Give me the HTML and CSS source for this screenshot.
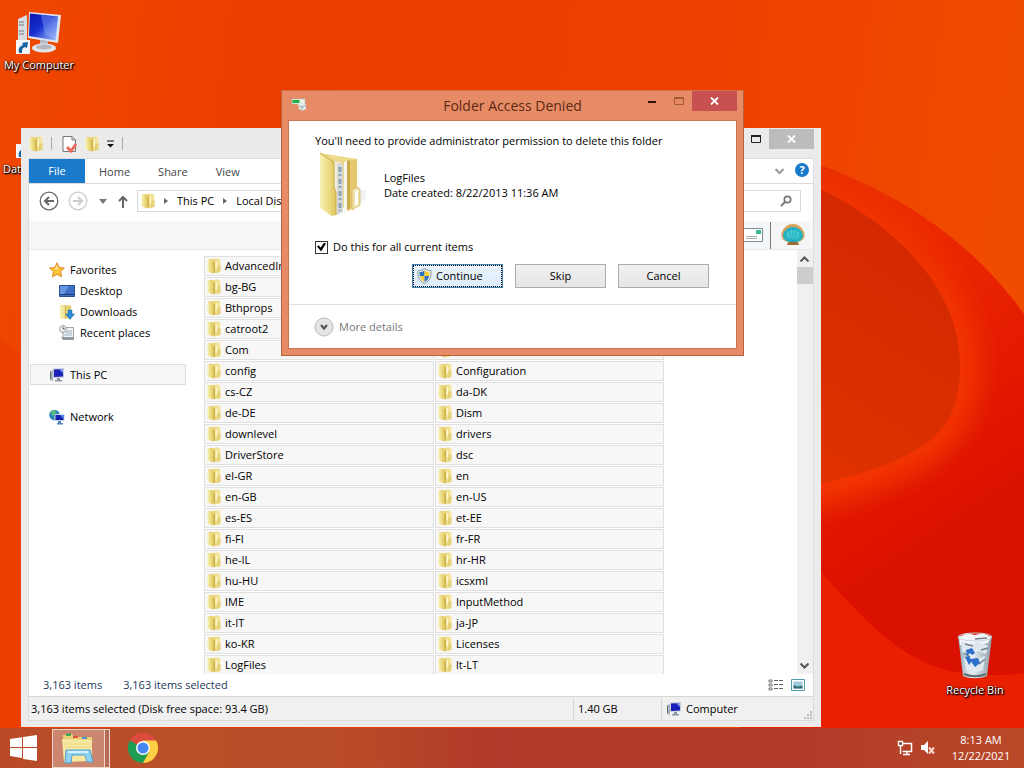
FILE: index.html
```html
<!DOCTYPE html>
<html lang="en">
<head>
<meta charset="utf-8">
<title>Folder Access Denied</title>
<link rel="stylesheet" href="styles.css">
</head>
<body>
<svg class="defs" aria-hidden="true">
  <defs>
    <linearGradient id="gPaper" x1="0" x2="1" y1="0" y2="0"><stop offset="0" stop-color="#f9f2b4"/><stop offset="1" stop-color="#e0c65c"/></linearGradient>
    <linearGradient id="gBack" x1="0" x2="1" y1="0" y2="0"><stop offset="0" stop-color="#e3c755"/><stop offset="1" stop-color="#f5e9a8"/></linearGradient>
    <linearGradient id="gScreen" x1="0" x2="1" y1="0" y2="1"><stop offset="0" stop-color="#0a14a8"/><stop offset="0.45" stop-color="#1730cf"/><stop offset="1" stop-color="#a9c6ff"/></linearGradient>
    <linearGradient id="gGlass" x1="0" x2="1" y1="0" y2="0"><stop offset="0" stop-color="#8fa6b4"/><stop offset="0.4" stop-color="#e8f0f4"/><stop offset="1" stop-color="#8c9da8"/></linearGradient>
    <symbol id="folder" viewBox="0 0 14 16">
      <path d="M1 1.500l10-1 2.500 1V14l-5 1.500z" fill="url(#gBack)"/>
      <path d="M.5 1.500L6.500 3v12.500l-6-2z" fill="url(#gPaper)"/>
      <path d="M6.500 4l1.500-.5v11l-1.500 1z" fill="#cdb044"/>
      <path d="M8.500 3.500l1.500-.5v7l-1.500 1z" fill="#fff8cf"/>
      <path d="M10 8l3.500-1v6.500L10 15z" fill="#e6d27a"/>
    </symbol>
    <symbol id="pc" viewBox="0 0 16 16">
      <path d="M1 4l3-1v11l-3-1z" fill="#a9b2b8"/><path d="M1.500 5v7" stroke="#5f6f66" />
      <path d="M4 1.500l11-.5v9.500l-11 .5z" fill="#c8ced8"/>
      <path d="M5 2.500l9-.5v7.500l-9 .5z" fill="#1a20b8"/>
      <path d="M10 2.300l4-.3v4z" fill="#7f9df5"/>
      <path d="M8 11h3v2h2v1.500H6V13h2z" fill="#8c96a2"/>
    </symbol>
    <symbol id="crumb" viewBox="0 0 6 8"><path d="M1 1l4 3-4 3z" fill="#666"/></symbol>
    <symbol id="shortcut" viewBox="0 0 14 14"><path d="M0 0h14v14H0z" fill="#f4f6f8"/><path d="M3 13c-1-5 1-7 4-8L6 3l6-1-1 6-2-1c-3 1-3 3-3 6z" fill="#1762a0"/></symbol>
  </defs>
</svg>

<main class="desktop">
  <svg class="wallpaper" viewBox="0 0 1024 768" preserveAspectRatio="none" aria-hidden="true">
    <defs>
      <linearGradient id="w1" x1="0" x2="1" y1="0" y2="0.100"><stop offset="0" stop-color="#ef4700"/><stop offset="0.300" stop-color="#ec3c00"/><stop offset="0.750" stop-color="#ef4100"/><stop offset="1" stop-color="#f04c00"/></linearGradient>
      <linearGradient id="w2" x1="0" x2="0.300" y1="0" y2="1"><stop offset="0" stop-color="#e63000"/><stop offset="0.280" stop-color="#ec2c00"/><stop offset="0.550" stop-color="#e51c00"/><stop offset="0.800" stop-color="#da1000"/></linearGradient>
      <linearGradient id="w3" x1="1" x2="0.600" y1="0" y2="1"><stop offset="0" stop-color="#cf2400"/><stop offset="1" stop-color="#e03200"/></linearGradient>
      <filter id="soft" x="-20%" y="-20%" width="140%" height="140%"><feGaussianBlur stdDeviation="11"/></filter>
      <clipPath id="band"><path d="M740 142C890 175 975 245 1024 314V768H740z"/></clipPath>
    </defs>
    <path d="M0 0h1024v768H0z" fill="url(#w1)"/>
    <path d="M0 340c20 10 40 30 50 60v368H0z" fill="#ed3e00"/>
    <g clip-path="url(#band)">
      <path d="M740 142h284v626H740z" fill="url(#w2)"/>
      <path d="M740 160C840 180 972 255 972 366C972 470 880 485 740 520z" fill="#f43600" stroke="#f03000" stroke-width="16" filter="url(#soft)"/>
      <path d="M740 160C830 180 960 255 960 366C960 455 900 465 740 504z" fill="url(#w3)"/>
      <path d="M740 490C870 610 890 690 1024 673V768H740z" fill="#e92000"/>
    </g>
  </svg>

  <a class="shortcut shortcut-computer" href="#">
    <svg width="50" height="46" viewBox="0 0 50 46" aria-hidden="true">
      <path d="M4 8l9-4v28l-9-2z" fill="#d9dde0"/><path d="M5 11h5M5 14h5M5 20h5M5 23h5" stroke="#737b80"/>
      <path d="M15 1l32 3-3 28-30-5z" fill="#dde5ee"/><path d="M16 2.500l28 3-2.500 24L15 25z" fill="url(#gScreen)"/>
      <path d="M27 4l17 2-2 21-11-3z" fill="#9dbcff" opacity=".35"/>
      <path d="M26 29l8 1v5h-8z" fill="#b6bcc4"/><ellipse cx="30" cy="37" rx="12" ry="4.500" fill="#e2e5e8"/><ellipse cx="30" cy="36" rx="8" ry="2.500" fill="#b3b9bf"/>
      <use href="#shortcut" x="2" y="29" width="14" height="14"/>
    </svg>
    <span>My Computer</span>
  </a>
  <a class="shortcut shortcut-data" href="#">
    <svg width="50" height="46" viewBox="0 0 50 46" aria-hidden="true"><use href="#shortcut" x="3" y="29" width="14" height="14"/></svg>
    <span>Data</span>
  </a>
  <a class="shortcut shortcut-bin" href="#">
    <svg width="40" height="48" viewBox="0 0 40 48" aria-hidden="true">
      <path d="M3 4h34l-5 40c-6 3-18 3-24 0z" fill="url(#gGlass)"/>
      <path d="M4 5l8-4 8 2 8-2 8 4-3 6-9 2-12-1-7 1z" fill="#f3f6f8"/><path d="M6 9l10 3 8-2 9 4-2 8-8-3-9 4-7-3zM9 26l9 2 12-4-2 14-9 3-8-3z" fill="#dfe8ee"/>
      <path d="M20 7l12-1M26 18l7-2M9 21l6 4M24 32l6-5M10 12l8 2" stroke="#76828b" stroke-width="1.500"/>
      <path d="M11 18l6-2 3 5-3 2-2-2-3 3zM10 25l4-1 3 5-3 4zM17 31l-1-4 7-1 2 5-5 4z" fill="#2c6fca"/>
      <ellipse cx="20" cy="5" rx="17" ry="4" fill="none" stroke="#c9d2d8"/><path d="M9 42c6 3 16 3 22 0" stroke="#5f6c75" stroke-width="2" fill="none"/>
    </svg>
    <span>Recycle Bin</span>
  </a>

  <section class="explorer" aria-label="File Explorer">
    <header class="explorer-title">
      <svg width="14" height="16"><use href="#folder"/></svg>
      <i class="sep"></i>
      <button type="button" aria-label="Properties"><svg width="15" height="18" viewBox="0 0 15 18"><path d="M1 1.500h9l3.500 3.500v11.500H1z" fill="#fff" stroke="#777"/><path d="M10 1.500V5h3.500" fill="none" stroke="#777"/><path d="M5 12l4 4 5-7" fill="none" stroke="#ec6a5a" stroke-width="3"/></svg></button>
      <button type="button" aria-label="New folder"><svg width="14" height="16"><use href="#folder"/></svg></button>
      <button type="button" aria-label="Customize"><svg width="7" height="8" viewBox="0 0 7 8"><path d="M0 1h7" stroke="#111"/><path d="M0 4h7L3.500 7.500z" fill="#111"/></svg></button>
      <i class="sep"></i>
      <span class="spacer"></span>
      <button type="button" aria-label="Maximize" class="win-max"><svg width="10" height="8" viewBox="0 0 10 8"><path d="M.5 1h9v6.500h-9z" fill="none" stroke="#222"/><path d="M0 1h10" stroke="#222" stroke-width="2"/></svg></button>
      <button type="button" aria-label="Close" class="win-close"><svg width="9" height="8" viewBox="0 0 9 8"><path d="M1 .5l7 7m0-7l-7 7" stroke="#fff" stroke-width="1.800"/></svg></button>
    </header>
    <div class="explorer-inner">
      <nav class="ribbon">
        <button type="button" class="tab tab-file">File</button>
        <button type="button" class="tab">Home</button>
        <button type="button" class="tab">Share</button>
        <button type="button" class="tab">View</button>
        <span class="spacer"></span>
        <button type="button" aria-label="Expand ribbon"><svg width="9" height="7" viewBox="0 0 9 7"><path d="M.5 1l4 4 4-4" fill="none" stroke="#999" stroke-width="2"/></svg></button>
        <button type="button" class="help" aria-label="Help">?</button>
      </nav>
      <div class="navbar">
        <button type="button" aria-label="Back"><svg width="20" height="20" viewBox="0 0 20 20"><circle cx="10" cy="10" r="8.800" fill="none" stroke="#6b6b6b" stroke-width="1.300"/><path d="M15 10H6m4-4l-4 4 4 4" fill="none" stroke="#666" stroke-width="2"/></svg></button>
        <button type="button" aria-label="Forward"><svg width="20" height="20" viewBox="0 0 20 20"><circle cx="10" cy="10" r="8.800" fill="none" stroke="#ccc" stroke-width="1.300"/><path d="M5 10h9m-4-4l4 4-4 4" fill="none" stroke="#ccc" stroke-width="2"/></svg></button>
        <button type="button" aria-label="Recent locations"><svg width="8" height="5" viewBox="0 0 8 5"><path d="M0 0h8L4 5z" fill="#777"/></svg></button>
        <button type="button" aria-label="Up"><svg width="10" height="13" viewBox="0 0 10 13"><path d="M5 13V2M1 6l4-4 4 4" fill="none" stroke="#666" stroke-width="2"/></svg></button>
        <div class="address">
          <svg width="14" height="16"><use href="#folder"/></svg>
          <svg width="6" height="8"><use href="#crumb"/></svg>
          <a href="#">This PC</a>
          <svg width="6" height="8"><use href="#crumb"/></svg>
          <a href="#">Local Disk (C:)</a>
        </div>
        <div class="search">
          <input type="search" aria-label="Search">
          <svg width="12" height="12" viewBox="0 0 12 12"><circle cx="7.500" cy="4.500" r="3.200" fill="none" stroke="#777" stroke-width="1.700"/><path d="M5 7l-4 4" stroke="#777" stroke-width="2"/></svg>
        </div>
      </div>
      <div class="classic-bar">
        <svg width="24" height="14" viewBox="0 0 24 14"><path d="M.5.5h23v13H.5z" fill="#fff" stroke="#7b8b92"/><path d="M17 2h5v4h-5z" fill="#3fb894"/><path d="M7 8.500h11M7 10.500h11" stroke="#a7b0b5"/></svg>
        <i class="rule"></i>
        <svg width="26" height="24" viewBox="0 0 26 24">
          <path d="M7 21l1-2C3 18 0 14 2 9 4 4 8 1 13 1s9 3 11 8c2 5-1 9-6 10l1 2z" fill="#d9a05a"/>
          <path d="M9 19C3 17 2 13 4 9c2-3 5-5 9-5s7 2 9 5c2 4 1 8-5 10z" fill="#25b4c6"/>
          <ellipse cx="13" cy="12" rx="7" ry="5" fill="#4fd3de" opacity=".7"/>
          <path d="M11 19L5 9M12 19L9 5M13 19V4M14 19l3-14M15 19l6-10" stroke="#1d97ab" stroke-width=".6" fill="none"/>
          <path d="M7 22h12l-2-3H9z" fill="#a06a34"/>
        </svg>
      </div>
      <div class="body">
        <ul class="tree">
          <li><a href="#"><svg width="16" height="16" viewBox="0 0 16 16"><path d="M8 .8l2.200 4.700 5.200.6-3.800 3.500 1 5.200L8 12.300l-4.600 2.500 1-5.200L.6 6.100l5.200-.6z" fill="#ffc53a" stroke="#dd8622"/><path d="M8 3l1 3.500L6 8z" fill="#fff0b0"/></svg>Favorites</a></li>
          <li class="sub"><a href="#"><svg width="16" height="16" viewBox="0 0 16 16"><path d="M.5 2.500h15v11H.5z" fill="#3d6fc4" stroke="#2b4f94"/><path d="M1 3h9L5 11H1z" fill="#6795e0"/><path d="M1 11.500h14" stroke="#223d70"/></svg>Desktop</a></li>
          <li class="sub"><a href="#"><svg width="16" height="16" viewBox="0 0 16 16"><path d="M1 1l8 0 3 1v12l-10 1-1-1z" fill="url(#gPaper)"/><path d="M6 2l1 .5V15H6z" fill="#d1b24a"/><path d="M9 6h4v4h2.500L11 15.500 6.500 10H9z" fill="#2b8fd6" stroke="#1c6aa8" stroke-width=".5"/></svg>Downloads</a></li>
          <li class="sub"><a href="#"><svg width="16" height="16" viewBox="0 0 16 16"><path d="M4 2.500h10.500v10H4z" fill="#f0f3f5" stroke="#9aa4aa"/><path d="M2 12h13v3H4z" fill="#8f9ba3"/><path d="M7 6h6M7 8h6M5 10h8" stroke="#9eb4c2"/><circle cx="4" cy="4" r="3.400" fill="#f8f8f8" stroke="#8f9ba3"/><path d="M4 2v2h2" stroke="#555" fill="none"/></svg>Recent places</a></li>
          <li class="current"><a href="#"><svg width="16" height="16"><use href="#pc"/></svg>This PC</a></li>
          <li class="last"><a href="#"><svg width="16" height="16" viewBox="0 0 16 16"><circle cx="5.500" cy="6" r="5.300" fill="#2b86b8"/><path d="M2 2l4-1 1 3-4 3zM5 7l3 1-2 3z" fill="#5cc07a"/><path d="M5.500 5h10v7h-10z" fill="#c5d4e4"/><path d="M6.500 6h8v5h-8z" fill="#151fb0"/><path d="M11 6h3.500v4z" fill="#5f86ef"/><path d="M9 12h3v2h2v1.500H8V14h1z" fill="#5a87b5"/></svg>Network</a></li>
        </ul>
        <div class="files">
          <ul class="column">
            <li><svg><use href="#folder"/></svg>AdvancedInstallers</li>
            <li><svg><use href="#folder"/></svg>bg-BG</li>
            <li><svg><use href="#folder"/></svg>Bthprops</li>
            <li><svg><use href="#folder"/></svg>catroot2</li>
            <li><svg><use href="#folder"/></svg>Com</li>
            <li><svg><use href="#folder"/></svg>config</li>
            <li><svg><use href="#folder"/></svg>cs-CZ</li>
            <li><svg><use href="#folder"/></svg>de-DE</li>
            <li><svg><use href="#folder"/></svg>downlevel</li>
            <li><svg><use href="#folder"/></svg>DriverStore</li>
            <li><svg><use href="#folder"/></svg>el-GR</li>
            <li><svg><use href="#folder"/></svg>en-GB</li>
            <li><svg><use href="#folder"/></svg>es-ES</li>
            <li><svg><use href="#folder"/></svg>fi-FI</li>
            <li><svg><use href="#folder"/></svg>he-IL</li>
            <li><svg><use href="#folder"/></svg>hu-HU</li>
            <li><svg><use href="#folder"/></svg>IME</li>
            <li><svg><use href="#folder"/></svg>it-IT</li>
            <li><svg><use href="#folder"/></svg>ko-KR</li>
            <li><svg><use href="#folder"/></svg>LogFiles</li>
          </ul>
          <ul class="column">
            <li><svg><use href="#folder"/></svg></li>
            <li><svg><use href="#folder"/></svg></li>
            <li><svg><use href="#folder"/></svg></li>
            <li><svg><use href="#folder"/></svg></li>
            <li><svg><use href="#folder"/></svg></li>
            <li><svg><use href="#folder"/></svg>Configuration</li>
            <li><svg><use href="#folder"/></svg>da-DK</li>
            <li><svg><use href="#folder"/></svg>Dism</li>
            <li><svg><use href="#folder"/></svg>drivers</li>
            <li><svg><use href="#folder"/></svg>dsc</li>
            <li><svg><use href="#folder"/></svg>en</li>
            <li><svg><use href="#folder"/></svg>en-US</li>
            <li><svg><use href="#folder"/></svg>et-EE</li>
            <li><svg><use href="#folder"/></svg>fr-FR</li>
            <li><svg><use href="#folder"/></svg>hr-HR</li>
            <li><svg><use href="#folder"/></svg>icsxml</li>
            <li><svg><use href="#folder"/></svg>InputMethod</li>
            <li><svg><use href="#folder"/></svg>ja-JP</li>
            <li><svg><use href="#folder"/></svg>Licenses</li>
            <li><svg><use href="#folder"/></svg>lt-LT</li>
          </ul>
        </div>
        <div class="scrollbar">
          <button type="button" aria-label="Scroll up"><svg width="9" height="6" viewBox="0 0 9 6"><path d="M.5 5.500l4-4 4 4" fill="none" stroke="#555" stroke-width="2"/></svg></button>
          <div class="track"><div class="thumb"></div></div>
          <button type="button" aria-label="Scroll down"><svg width="9" height="6" viewBox="0 0 9 6"><path d="M.5.5l4 4 4-4" fill="none" stroke="#555" stroke-width="2"/></svg></button>
        </div>
      </div>
      <div class="details-bar">
        <span>3,163 items</span><span>3,163 items selected</span>
        <span class="spacer"></span>
        <button type="button" aria-label="Details view"><svg width="16" height="12" viewBox="0 0 16 12"><path d="M1 1h3v2H1zM1 5h3v2H1zM1 9h3v2H1z" fill="none" stroke="#777"/><path d="M6 1.500h4m1 0h4M6 5.500h4m1 0h4M6 9.500h4m1 0h4" stroke="#666"/></svg></button>
        <button type="button" aria-label="Large icons view"><svg width="14" height="12" viewBox="0 0 14 12"><path d="M.5.500h13v11H.5z" fill="#fff" stroke="#5699ad"/><path d="M2.500 2.500h9v7h-9z" fill="#9cc9dc"/><path d="M2.500 6l4 1.500 5-1v3h-9z" fill="#2f6f74"/></svg></button>
      </div>
      <footer class="status">
        <span class="cell cell-main">3,163 items selected (Disk free space: 93.4 GB)</span>
        <span class="cell cell-size">1.40 GB</span>
        <span class="cell cell-zone"><svg width="16" height="16"><use href="#pc"/></svg>Computer</span>
        <svg class="grip" width="9" height="9" viewBox="0 0 9 9"><path d="M7 1h2v2H7zM4 4h2v2H4zM7 4h2v2H7zM1 7h2v2H1zM4 7h2v2H4zM7 7h2v2H7z" fill="#bbb"/></svg>
      </footer>
    </div>
  </section>

  <section class="dialog" role="dialog" aria-labelledby="dialog-title">
    <header class="dialog-head">
      <svg width="16" height="16" viewBox="0 0 16 16" aria-hidden="true"><path d="M1 1h13v5H1z" fill="#e9f3ea" stroke="#a9b9ac" stroke-width=".5"/><path d="M1.500 2h7v3h-7z" fill="#1fb141"/><path d="M7 6l5-1 3 1v5l-4 2-3-2z" fill="#e6e9ea"/><path d="M8 8l3 1 4-2M11 9v4" stroke="#9ba5ab" fill="none"/></svg>
      <h1 id="dialog-title">Folder Access Denied</h1>
      <div class="dialog-controls">
        <button type="button" aria-label="Minimize"><svg width="8" height="3" viewBox="0 0 8 3"><path d="M0 1h8v2H0z" fill="#301208"/></svg></button>
        <button type="button" aria-label="Maximize" disabled><svg width="10" height="8" viewBox="0 0 10 8"><path d="M.5 1h9v6.500h-9z" fill="none" stroke="#a35b35"/><path d="M0 1h10" stroke="#a35b35" stroke-width="2"/></svg></button>
        <button type="button" class="dialog-close" aria-label="Close"><svg width="9" height="8" viewBox="0 0 9 8"><path d="M1 .5l7 7m0-7l-7 7" stroke="#fff" stroke-width="1.800"/></svg></button>
      </div>
    </header>
    <div class="dialog-body">
      <div class="dialog-main">
        <p>You'll need to provide administrator permission to delete this folder</p>
        <div class="item">
          <svg width="52" height="68" viewBox="0 0 52 68" aria-hidden="true">
            <path d="M37 58l13-9 1-9-12-4z" fill="#ddd" opacity=".45"/>
            <path d="M5 2l37 6v44l-24 8z" fill="#ecd98a"/>
            <path d="M17 10l8 1v52l-8 2z" fill="#f1eedc"/><path d="M22 12l6 1v48l-6 3z" fill="#d6d9d8"/>
            <path d="M25 16v44" stroke="#8fa3b1" stroke-width="3" stroke-dasharray="5 2 2 3"/>
            <path d="M29 11l3-1v50l-3 2z" fill="#f6f5ee"/>
            <path d="M32 10l10-2v44l-8 8-2-1z" fill="#e4c96e"/><path d="M32 10l3-1v48l-3 2z" fill="#caa94b"/>
            <path d="M5 2l14 9v25l2 5v23l-4 1L5 57z" fill="url(#gPaper)"/>
            <path d="M5 2l14 9v25l2 5v23" fill="none" stroke="#c8a94c"/><path d="M37 38l6-2 2 3v15l-8 5z" fill="#f0e2a4" stroke="#ccb15d" stroke-width=".7"/><path d="M40 40l3-1v14l-3 2z" fill="#fff"/>
          </svg>
          <div class="item-text"><div>LogFiles</div><div>Date created: 8/22/2013 11:36 AM</div></div>
        </div>
        <div class="check"><input type="checkbox" id="all-items" checked><label for="all-items">Do this for all current items</label></div>
        <div class="actions">
          <button type="button" class="btn btn-primary"><svg width="15" height="16" viewBox="0 0 15 16" aria-hidden="true"><path d="M7.500.5c2 1.500 4 2 6.500 2 .5 6-1 10.500-6.500 13C2 13 .5 8.500 1 2.500c2.500 0 4.500-.5 6.500-2z" fill="#e8edf0" stroke="#8c979e"/><path d="M7.500 2.500C6 3.500 4 4 2.500 4c0 1.500 0 2.500.3 4h4.700z" fill="#2a73c4"/><path d="M7.500 2.500c1.500 1 3.500 1.500 5 1.500 0 1.500 0 2.500-.3 4H7.500z" fill="#f7d038"/><path d="M2.800 8c.7 2.700 2 4.500 4.700 6V8z" fill="#f7d038"/><path d="M12.200 8c-.7 2.700-2 4.500-4.700 6V8z" fill="#2a73c4"/></svg>Continue</button>
          <button type="button" class="btn">Skip</button>
          <button type="button" class="btn">Cancel</button>
        </div>
      </div>
      <div class="dialog-more">
        <button type="button" class="more"><svg width="20" height="20" viewBox="0 0 20 20" aria-hidden="true"><circle cx="10" cy="10" r="9" fill="#e4e4e4" stroke="#bdbdbd"/><path d="M7 8l3 3.500L13 8" fill="none" stroke="#555" stroke-width="2.200"/></svg>More details</button>
      </div>
    </div>
  </section>
</main>

<nav class="taskbar" aria-label="Taskbar">
  <button type="button" class="start" aria-label="Start"><svg width="28" height="26" viewBox="0 0 28 26"><path d="M0 4l12-1.800V12H0zM13 2l14-2v12H13zM0 13h12v10L0 21zM13 13h14v13l-14-2z" fill="#fff"/></svg></button>
  <button type="button" class="task-explorer" aria-label="File Explorer"><svg width="34" height="32" viewBox="0 0 34 32">
    <path d="M2 3l9-1 2 3h18v24H3z" fill="#e9cf72"/><path d="M5 2l5-1v3H5z" fill="#3ea655"/><path d="M12 4h5v2h-5z" fill="#d9533f"/><path d="M21 5h5v2h-5z" fill="#4b95d6"/>
    <path d="M1 7l30 1v21l-28 1z" fill="#f6e8a0"/><path d="M3 12h28M3 15h28" stroke="#ead48a"/>
    <path d="M5 18h24l3 12h-6l-2-7H11l-1 8H4z" fill="#8fd2f2" stroke="#4da3d0"/><path d="M7 20h20" stroke="#d4f1fd" stroke-width="2"/></svg></button>
  <button type="button" class="task-chrome" aria-label="Chrome"><svg width="30" height="30" viewBox="0 0 30 30"><path d="M15 15L2 7.500A15 15 0 0 1 28 7.500z" fill="#dd4b3e"/><path d="M15 15L2 7.500A15 15 0 0 0 15 30l6.500-11z" fill="#1f9d55"/><path d="M15 15l6 4-6 11A15 15 0 0 0 28 7.500H15z" fill="#fdd045"/><circle cx="15" cy="15" r="7" fill="#fff"/><circle cx="15" cy="15" r="5.500" fill="#4686f0"/></svg></button>
  <span class="spacer"></span>
  <button type="button" aria-label="Network"><svg width="16" height="16" viewBox="0 0 16 16"><path d="M5 3.500h9.500v8H5.500M10 12v2.500M6 14.500h7" fill="none" stroke="#fff" stroke-width="1.500"/><path d="M1.500 1.500h4v4h-4zM3.500 6v8" fill="#7b3020" stroke="#fff" stroke-width="1.400"/></svg></button>
  <button type="button" class="sound" aria-label="Sound muted"><svg width="15" height="14" viewBox="0 0 15 14"><path d="M0 4h3l4-4v13L3 9H0z" fill="#fff"/><path d="M8 6.500l5 6m0-6l-5 6" stroke="#fbd8cf" stroke-width="2"/></svg></button>
  <button type="button" class="clock"><span>8:13 AM</span><span>12/22/2021</span></button>
</nav>
</body>
</html>
```

FILE: styles.css
```css
* { box-sizing: border-box; }
body {
  margin: 0;
  height: 100vh;
  display: grid;
  grid-template-rows: 1fr 40px;
  overflow: hidden;
  font: 11px/16px "Open Sans", "Noto Sans", sans-serif;
  color: #000;
  background: #ec3c00;
}
button { font: inherit; color: inherit; border: 0; padding: 0; background: none; display: inline-flex; align-items: center; justify-content: center; }
ul { list-style: none; margin: 0; padding: 0; }
a { color: inherit; text-decoration: none; }
svg { display: block; flex: none; }
.defs { position: absolute; width: 0; height: 0; }
.spacer { flex: 1; }

.desktop { position: relative; min-height: 0; }
.wallpaper { position: absolute; inset: 0; width: 100%; height: 100vh; }

.shortcut { position: absolute; display: flex; flex-direction: column; align-items: center; width: 78px; color: #fff; text-shadow: 1px 1px 2px #000, 1px 1px 1px #000, 0 0 2px #000; }
.shortcut-computer { left: 0; top: 11px; }
.shortcut-data { left: 0; top: 115px; align-items: flex-start; padding-left: 3px; }
.shortcut-data svg { margin-left: 10px; }
.shortcut-bin { right: 10px; top: 632px; }
.shortcut-bin span { margin-top: 2px; }

.explorer { position: absolute; left: 21px; right: 203px; top: 128px; bottom: 1px; padding: 0 8px 7px; background: #ebebeb; display: flex; flex-direction: column; }
.explorer-title { display: flex; align-items: center; height: 31px; gap: 8px; }
.explorer-title .sep { width: 1px; height: 13px; background: #aaa; }
.explorer-title .sep + button { margin-left: 2px; }
.win-max { align-self: flex-start; height: 22px; }
.win-close { align-self: flex-start; width: 45px; height: 20px; margin: 1px -1px 0 0; background: #bcbcbc; }
.explorer-inner { flex: 1; min-height: 0; display: flex; flex-direction: column; background: #fff; outline: 1px solid #dcdcdc; }
.ribbon { display: flex; height: 25px; border-bottom: 1px solid #dcdcdc; color: #444; padding-right: 4px; }
.tab { padding: 2px 14px 0; }
.tab-file { width: 56px; padding: 0; background: #1979ca; color: #fff; }
.help { width: 14px; height: 14px; margin: 4px 0 0 11px; border-radius: 50%; background: #1979ca; color: #fff; font-weight: bold; }
.navbar { display: flex; align-items: center; height: 37px; padding: 0 12px 3px 10px; gap: 9px; }
.navbar button + button + button { margin-left: 2px; }
.address { flex: 1; display: flex; align-items: center; gap: 8px; height: 22px; padding-left: 3px; border: 1px solid #d9d9d9; }
.search { display: flex; align-items: center; width: 170px; height: 22px; border: 1px solid #d9d9d9; padding-right: 8px; }
.search input { flex: 1; min-width: 0; border: 0; outline: 0; font: inherit; }
.classic-bar { display: flex; justify-content: flex-end; align-items: center; height: 29px; gap: 7px; padding-right: 7px; background: #f5f6f7; border-bottom: 1px solid #e6e9ec; }
.classic-bar .rule { width: 1px; height: 27px; background: #777; margin-right: 2px; }

.body { flex: 1; min-height: 0; display: flex; }
.tree { width: 175px; flex: none; padding: 9px 18px 0 1px; }
.tree li { height: 21px; padding-left: 18px; border: 1px solid transparent; }
.tree a { display: flex; align-items: center; gap: 5px; height: 19px; }
.tree .sub { padding-left: 28px; }
.tree .current { margin: 21px 0; background: #f7f7f7; border-color: #dedede; }
.files { flex: 1; min-width: 0; display: grid; grid-template-columns: 230px 229px; gap: 1px; padding-top: 6px; overflow: hidden; align-content: start; }
.column { display: flex; flex-direction: column; gap: 1px; }
.column li { display: flex; align-items: center; gap: 4px; height: 20px; padding-left: 2px; background: #f7f7f7; border: 1px solid #e0e0e0; }
.column svg { width: 14px; height: 16px; }
.scrollbar { width: 16px; display: flex; flex-direction: column; background: #f0f0f0; }
.scrollbar button { height: 17px; padding-right: 1px; }
.track { flex: 1; }
.thumb { height: 17px; background: #cdcdcd; }
.details-bar { display: flex; align-items: center; height: 22px; gap: 21px; padding: 0 8px 0 14px; color: #1e395b; }
.details-bar button + button { margin-left: -14px; }
.status { display: flex; align-items: center; height: 24px; background: #f0f0f0; border-top: 1px solid #d5d5d5; }
.cell { display: flex; align-items: center; gap: 4px; height: 22px; padding-left: 4px; border-left: 1px solid #d5d5d5; }
.cell-main { flex: 1; border-left: 0; padding-left: 2px; }
.cell-size { width: 88px; }
.cell-zone { width: 142px; }
.grip { align-self: flex-end; margin: 0 1px 1px 0; }

.dialog { position: absolute; left: 281px; right: 280px; top: 90px; padding: 0 7px 7px; background: #e78b66; border: 1px solid #b9603d; border-top-color: #d07147; }
.dialog-head { position: relative; display: flex; align-items: center; height: 30px; padding-left: 2px; }
.dialog-head h1 { flex: 1; margin: 0 0 0 -18px; text-align: center; font-size: 14px; line-height: 20px; font-weight: normal; color: #5c2a14; }
.dialog-controls { position: absolute; right: -1px; top: 0; display: flex; align-items: center; gap: 18px; }
.dialog-close { width: 45px; height: 20px; margin-left: -10px; background: #c75050; }
.dialog-body { background: #fff; outline: 1px solid #c97552; }
.dialog-main { padding: 12px 27px 16px 26px; border-bottom: 1px solid #dfdfdf; }
.dialog-main p { margin: 0; }
.item { display: flex; align-items: center; gap: 17px; height: 72px; }
.item-text { line-height: 15px; }
.check { display: flex; align-items: center; gap: 5px; margin: 18px 0 9px; }
.check input { appearance: none; display: grid; place-items: center; width: 13px; height: 13px; margin: 0; border: 1px solid #333; background: #fff; }
.check input:checked::before { content: ""; width: 9px; height: 9px; background: #000; clip-path: polygon(0 45%, 18% 30%, 40% 55%, 80% 0, 100% 10%, 45% 100%); }
.actions { display: flex; justify-content: flex-end; gap: 12px; }
.btn { width: 91px; height: 24px; border: 1px solid #acacac; background: linear-gradient(#f1f1f1, #e5e5e5); gap: 4px; }
.btn-primary { justify-content: flex-start; padding-left: 4px; border-color: #3c7fb1; background: linear-gradient(#eaf4fd, #dcecfb); outline: 1px dotted #000; outline-offset: -2px; }
.dialog-more { display: flex; padding: 12px 25px 11px; }
.more { gap: 5px; color: #777; }

.taskbar { position: relative; display: flex; align-items: center; padding-right: 12px; color: #fff; background: linear-gradient(90deg, #b84a28 0, #b85027 18%, #b84a28 35%, #b03a29 48%, #b03928 75%, #b84928 100%); }
.start { width: 51px; height: 40px; padding-right: 3px; }
.task-explorer { width: 58px; height: 39px; margin-left: 1px; padding-right: 6px; border: 1px solid #f3d6ca; background: #cc856f; box-shadow: inset -4px 0 #b56a55, inset -5px 0 #f3d6ca; }
.task-chrome { margin-left: 18px; }
.sound { margin-left: 8px; }
.clock { flex-direction: column; margin-left: 14px; width: 62px; }
```
